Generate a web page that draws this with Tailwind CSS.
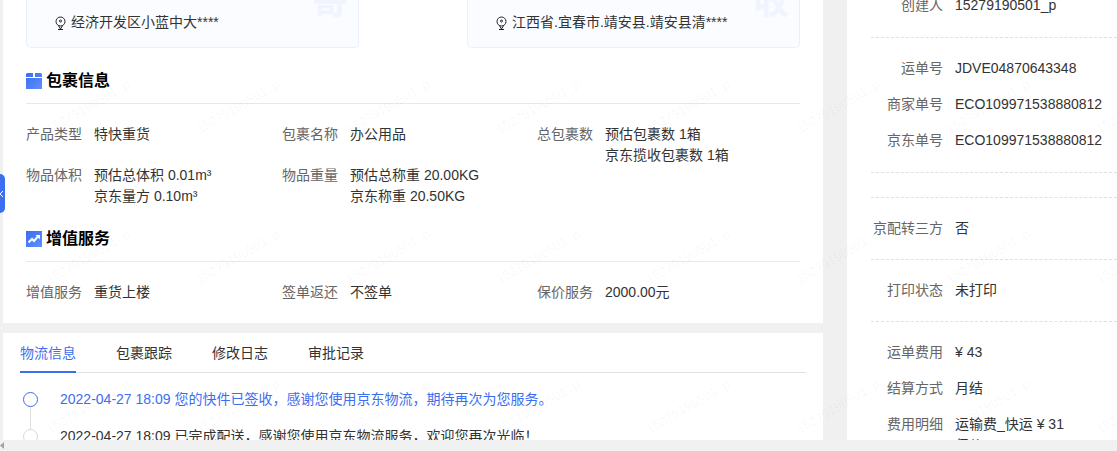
<!DOCTYPE html>
<html lang="zh-CN">
<head>
  <meta charset="UTF-8">
  <title>运单详情</title>
  <script src="https://cdn.jsdelivr.net/npm/@tailwindcss/browser@4"></script>
</head>
<body class="h-[451px] w-[1117px] overflow-hidden bg-[#f0f0f0] font-['Liberation_Sans','Noto_Sans_CJK_SC',sans-serif] text-[14px] leading-[21px] text-[#333]">
  <div class="relative h-[440px] overflow-hidden">
    <div class="flex h-[440px] pl-[3px]">
      <!-- left column -->
      <div class="w-[820px] shrink-0">
        <div class="h-[323px] bg-white px-[23px]">
          <div class="grid grid-cols-[333px_333px] gap-[108px]">
            <div class="relative h-[48px] overflow-hidden rounded-b-[5px] border border-t-0 border-[#e8efff] bg-[#fbfcff] pl-[28px] pt-[12px]">
              <span class="absolute right-[10px] top-[-18px] text-[36px] leading-[40px] font-bold text-[#f0f4ff]">寄</span>
              <div class="relative flex items-center gap-[5px]">
                <svg class="h-[14px] w-[11px]" viewBox="0 0 11 14" fill="none" stroke="#222" stroke-width="1"><circle cx="5.500" cy="5.500" r="4.500"/><circle cx="5.500" cy="5" r="1"/><path d="M3.500 9.700 5.500 13 7.500 9.700M3 13.500h5"/></svg>
                <span>经济开发区小蓝中大****</span>
              </div>
            </div>
            <div class="relative h-[48px] overflow-hidden rounded-b-[5px] border border-t-0 border-[#e8efff] bg-[#fbfcff] pl-[28px] pt-[12px]">
              <span class="absolute right-[10px] top-[-18px] text-[36px] leading-[40px] font-bold text-[#f0f4ff]">收</span>
              <div class="relative flex items-center gap-[5px]">
                <svg class="h-[14px] w-[11px]" viewBox="0 0 11 14" fill="none" stroke="#222" stroke-width="1"><circle cx="5.500" cy="5.500" r="4.500"/><circle cx="5.500" cy="5" r="1"/><path d="M3.500 9.700 5.500 13 7.500 9.700M3 13.500h5"/></svg>
                <span>江西省.宜春市.靖安县.靖安县清****</span>
              </div>
            </div>
          </div>

          <div class="mt-[20px] flex h-[36px] items-start gap-[4px] border-b border-[#e8e8e8] pt-px text-[16px] leading-[24px] font-bold text-black">
            <svg class="mt-[4px] h-[16px] w-[16px]" viewBox="0 0 16 16"><defs><linearGradient id="pk" x1="0" y1="0" x2="1" y2="1"><stop offset="0" stop-color="#3a6df0"/><stop offset="1" stop-color="#5f8fff"/></linearGradient></defs><path fill="url(#pk)" d="M1.500 0H7v4H0V1.500A1.500 1.500 0 0 1 1.500 0ZM9 0h5.500A1.500 1.500 0 0 1 16 1.500V4H9ZM0 5h16v11H0Z"/></svg>
            <span>包裹信息</span>
          </div>

          <div class="mt-[20px] grid grid-cols-[256px_255px_1fr] grid-rows-[41px_42px]">
            <div class="flex gap-[12px]"><span class="text-[#666]">产品类型</span><span>特快重货</span></div>
            <div class="flex gap-[12px]"><span class="text-[#666]">包裹名称</span><span>办公用品</span></div>
            <div class="flex gap-[12px]"><span class="text-[#666]">总包裹数</span><div><div>预估包裹数 1箱</div><div>京东揽收包裹数 1箱</div></div></div>
            <div class="flex gap-[12px]"><span class="text-[#666]">物品体积</span><div><div>预估总体积 0.01m³</div><div>京东量方 0.10m³</div></div></div>
            <div class="flex gap-[12px]"><span class="text-[#666]">物品重量</span><div><div>预估总称重 20.00KG</div><div>京东称重 20.50KG</div></div></div>
          </div>

          <div class="mt-[19px] flex h-[36px] items-start gap-[4px] border-b border-[#e8e8ee] pt-px text-[16px] leading-[24px] font-bold text-black">
            <svg class="mt-[4px] h-[16px] w-[16px]" viewBox="0 0 16 16"><rect width="16" height="16" fill="url(#pk)"/><path d="M2.500 11.500 6 8l2 2 4-4.500" fill="none" stroke="#fff" stroke-width="2"/><path d="M9.500 4H14v4.500Z" fill="#fff"/></svg>
            <span>增值服务</span>
          </div>

          <div class="mt-[20px] grid grid-cols-[256px_255px_1fr]">
            <div class="flex gap-[12px]"><span class="text-[#666]">增值服务</span><span>重货上楼</span></div>
            <div class="flex gap-[12px]"><span class="text-[#666]">签单返还</span><span>不签单</span></div>
            <div class="flex gap-[12px]"><span class="text-[#666]">保价服务</span><span>2000.00元</span></div>
          </div>
        </div>

        <div class="mt-[10px] h-[107px] overflow-hidden bg-white pl-[17px] pr-[17px] pt-[10px]">
          <div class="flex h-[30px] gap-[40px] border-b border-[#dfe1e6]">
            <span class="h-[30px] border-b-2 border-[#3c6ef0] text-[#3c6ef0]">物流信息</span>
            <span>包裹跟踪</span>
            <span>修改日志</span>
            <span>审批记录</span>
          </div>
          <div class="relative mt-[16px] pl-[40px]">
            <div class="absolute left-[9.5px] top-[10px] h-[37px] w-px bg-[#dfdfdf]"></div>
            <div class="relative flex items-center text-[#3c6ef0]">
              <span class="absolute left-[-37px] h-[15px] w-[15px] rounded-full border border-[#3c6ef0] bg-white"></span>
              <span>2022-04-27 18:09 您的快件已签收，感谢您使用京东物流，期待再次为您服务。</span>
            </div>
            <div class="relative mt-[16px] flex items-center">
              <span class="absolute left-[-37px] h-[15px] w-[15px] rounded-full border border-[#d9d9d9] bg-white"></span>
              <span>2022-04-27 18:09 已完成配送，感谢您使用京东物流服务，欢迎您再次光临！</span>
            </div>
          </div>
        </div>
      </div>

      <!-- right column -->
      <div class="ml-[24px] w-[270px] shrink-0 bg-white pl-[24px]">
        <div class="-mt-[5px] flex gap-[12px]"><span class="w-[72px] text-right text-[#666]">创建人</span><span>15279190501_p</span></div>
        <div class="mt-[21px] border-t border-dashed border-[#e0e0e0]"></div>
        <div class="mt-[20px] flex gap-[12px]"><span class="w-[72px] text-right text-[#666]">运单号</span><span>JDVE04870643348</span></div>
        <div class="mt-[15px] flex gap-[12px]"><span class="w-[72px] text-right text-[#666]">商家单号</span><span>ECO109971538880812</span></div>
        <div class="mt-[15px] flex gap-[12px]"><span class="w-[72px] text-right text-[#666]">京东单号</span><span>ECO109971538880812</span></div>
        <div class="mt-[21px] border-t border-dashed border-[#e0e0e0]"></div>
        <div class="mt-[24px] border-t border-dashed border-[#e0e0e0]"></div>
        <div class="mt-[20px] flex gap-[12px]"><span class="w-[72px] whitespace-nowrap text-right text-[#666]">京配转三方</span><span>否</span></div>
        <div class="mt-[20px] border-t border-dashed border-[#e0e0e0]"></div>
        <div class="mt-[20px] flex gap-[12px]"><span class="w-[72px] text-right text-[#666]">打印状态</span><span>未打印</span></div>
        <div class="mt-[20px] border-t border-dashed border-[#e0e0e0]"></div>
        <div class="mt-[20px] flex gap-[12px]"><span class="w-[72px] text-right text-[#666]">运单费用</span><span>¥ 43</span></div>
        <div class="mt-[15px] flex gap-[12px]"><span class="w-[72px] text-right text-[#666]">结算方式</span><span>月结</span></div>
        <div class="mt-[15px] flex gap-[12px]"><span class="w-[72px] text-right text-[#666]">费用明细</span><div><div>运输费_快运 ¥ 31</div><div>保价</div></div></div>
      </div>
    </div>

    <!-- collapse handle -->
    <div class="absolute left-0 top-[174px] flex h-[39px] w-[5px] items-center justify-start overflow-hidden rounded-r-[5px] bg-[#3c6ef0]">
      <svg class="h-[8px] w-[3px] shrink-0" viewBox="0 0 3 8" fill="none" stroke="#fff"><path d="M3 1 0 4l3 3"/></svg>
    </div>

    <!-- watermark -->
    <div id="watermark" class="pointer-events-none absolute left-[-137px] top-[-119px] grid grid-cols-[repeat(9,150px)] auto-rows-[150px]"></div>
  </div>

  <!-- scrollbar -->
  <div class="flex h-[11px] items-center bg-[#f1f1f1]">
    <svg class="h-[7px] w-[4px]" viewBox="0 0 4 7"><path d="M4 0v7L0 3.500Z" fill="#a3a3a3"/></svg>
  </div>

  <script>
    const watermark = document.getElementById('watermark');
    for (let i = 0; i < 36; i++) {
      const cell = document.createElement('div');
      cell.className = 'flex items-center justify-center';
      const text = document.createElement('span');
      text.className = 'rotate-[-30deg] whitespace-nowrap text-[13px] text-black/[0.04]';
      text.textContent = '15279190501_p';
      cell.appendChild(text);
      watermark.appendChild(cell);
    }
  </script>
</body>
</html>
